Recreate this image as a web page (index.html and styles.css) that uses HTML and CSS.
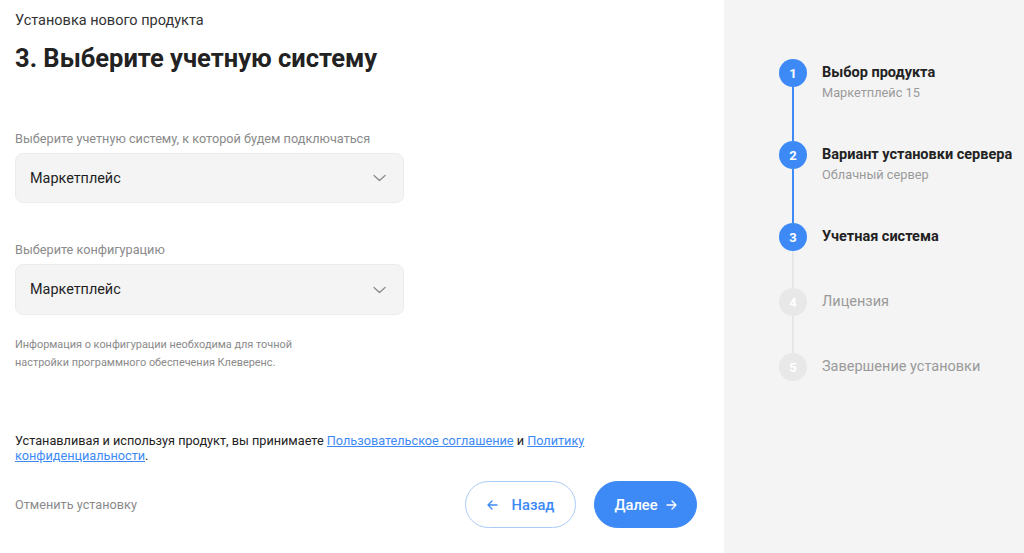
FILE: index.html
```html
<!DOCTYPE html>
<html lang="ru">
<head>
<meta charset="utf-8">
<title>Установка нового продукта</title>
<link rel="stylesheet" href="styles.css">
</head>
<body>
<div class="page">
  <main class="main">
    <div class="crumb">Установка нового продукта</div>
    <h1 class="title">3. Выберите учетную систему</h1>

    <div class="field-label first">Выберите учетную систему, к которой будем подключаться</div>
    <div class="select">
      <span class="select-value">Маркетплейс</span>
      <svg class="chevron" width="13" height="8" viewBox="0 0 13 8"><path d="M1 1.5 L6.5 6.5 L12 1.5" fill="none" stroke="#8a8a8a" stroke-width="1.3" stroke-linecap="round" stroke-linejoin="round"/></svg>
    </div>

    <div class="field-label second">Выберите конфигурацию</div>
    <div class="select tall">
      <span class="select-value">Маркетплейс</span>
      <svg class="chevron" width="13" height="8" viewBox="0 0 13 8"><path d="M1 1.5 L6.5 6.5 L12 1.5" fill="none" stroke="#8a8a8a" stroke-width="1.3" stroke-linecap="round" stroke-linejoin="round"/></svg>
    </div>

    <p class="info">Информация о конфигурации необходима для точной настройки программного обеспечения Клеверенс.</p>

    <p class="agreement">Устанавливая и используя продукт, вы принимаете <a href="#">Пользовательское соглашение</a> и <a href="#">Политику конфиденциальности</a>.</p>

    <div class="footer">
      <a class="cancel" href="#">Отменить установку</a>
      <div class="buttons">
        <button class="btn btn-back"><svg class="arrow-icon left" width="11" height="10" viewBox="0 0 11 10"><path d="M10 5 H1.2 M5 1 L1 5 L5 9" fill="none" stroke="currentColor" stroke-width="1.3" stroke-linecap="round" stroke-linejoin="round"/></svg>Назад</button>
        <button class="btn btn-next">Далее<svg class="arrow-icon right" width="11" height="10" viewBox="0 0 11 10"><path d="M1 5 H9.8 M6 1 L10 5 L6 9" fill="none" stroke="currentColor" stroke-width="1.3" stroke-linecap="round" stroke-linejoin="round"/></svg></button>
      </div>
    </div>
  </main>

  <aside class="side">
    <div class="step done tall-step">
      <div class="rail"><div class="circle">1</div><div class="line blue"></div></div>
      <div class="step-text"><div class="step-title">Выбор продукта</div><div class="step-sub">Маркетплейс 15</div></div>
    </div>
    <div class="step done tall-step">
      <div class="rail"><div class="circle">2</div><div class="line blue"></div></div>
      <div class="step-text"><div class="step-title">Вариант установки сервера</div><div class="step-sub">Облачный сервер</div></div>
    </div>
    <div class="step current short-step">
      <div class="rail"><div class="circle">3</div><div class="line grey"></div></div>
      <div class="step-text"><div class="step-title">Учетная система</div></div>
    </div>
    <div class="step future short-step">
      <div class="rail"><div class="circle">4</div><div class="line grey"></div></div>
      <div class="step-text"><div class="step-title">Лицензия</div></div>
    </div>
    <div class="step future">
      <div class="rail"><div class="circle">5</div></div>
      <div class="step-text"><div class="step-title">Завершение установки</div></div>
    </div>
  </aside>
</div>
</body>
</html>
```

FILE: styles.css
```css
* { box-sizing: border-box; }
html, body { margin: 0; padding: 0; }
body {
  font-family: Roboto, "Liberation Sans", Arial, sans-serif;
  color: #222;
  background: #fff;
}
.page {
  display: flex;
  width: 1024px;
  height: 553px;
}
.main {
  width: 724px;
  flex: none;
  padding: 11px 27px 0 15px;
  display: flex;
  flex-direction: column;
}
.crumb {
  font-size: 14.5px;
  line-height: 20px;
  color: #333;
}
.title {
  margin: 11px 0 0;
  font-size: 25.5px;
  line-height: 32px;
  font-weight: 700;
  color: #222;
}
.field-label {
  font-size: 12.7px;
  line-height: 18px;
  color: #8a8a8a;
}
.field-label.first { margin-top: 56px; }
.field-label.second { margin-top: 38px; }
.select {
  margin-top: 5px;
  width: 389px;
  height: 50px;
  background: #f4f4f4;
  border: 1px solid #ececec;
  border-radius: 8px;
  display: flex;
  align-items: center;
  justify-content: space-between;
  padding: 0 17px 0 14px;
}
.select.tall { height: 51px; }
.select-value {
  font-size: 14.4px;
  color: #1e1e1e;
}
.chevron { display: block; }
.info {
  margin: 21px 0 0;
  max-width: 300px;
  font-size: 10.9px;
  line-height: 18px;
  color: #8a8a8a;
}
.agreement {
  margin: 61px 0 0;
  max-width: 600px;
  font-size: 12.7px;
  line-height: 15px;
  color: #222;
}
.agreement a {
  color: #3d8af7;
  text-decoration: underline;
}
.footer {
  margin-top: 18px;
  display: flex;
  align-items: center;
  justify-content: space-between;
}
.cancel {
  font-size: 12.7px;
  color: #8a8a8a;
  text-decoration: none;
}
.buttons {
  display: flex;
  gap: 18px;
}
.btn {
  height: 47px;
  border-radius: 24px;
  font-family: Roboto, "Liberation Sans", Arial, sans-serif;
  font-size: 14.7px;
  font-weight: 500;
  display: flex;
  align-items: center;
  justify-content: center;
  cursor: pointer;
  padding: 0;
}
.btn-back {
  width: 111px;
  background: #fff;
  border: 1px solid #a9cbf5;
  color: #3d8af7;
}
.arrow-icon { display: block; }
.arrow-icon.left { margin-right: 14px; }
.arrow-icon.right { margin-left: 8px; }
.btn-next {
  width: 103px;
  background: #3d8af7;
  border: 1px solid #3d8af7;
  color: #fff;
}

.side {
  flex: 1;
  background: #f4f4f4;
  padding: 59px 0 0 55px;
}
.step {
  display: flex;
  gap: 15px;
}
.tall-step { height: 82px; }
.short-step { height: 65px; }
.rail {
  width: 28px;
  flex: none;
  display: flex;
  flex-direction: column;
  align-items: center;
}
.circle {
  width: 28px;
  height: 28px;
  border-radius: 50%;
  background: #3d8af7;
  color: #fff;
  font-size: 13px;
  font-weight: 700;
  display: flex;
  align-items: center;
  justify-content: center;
  flex: none;
}
.future .circle { background: #e8e8e8; }
.line {
  width: 2px;
  flex: 1;
}
.line.blue { background: #3d8af7; }
.line.grey { background: #e6e6e6; }
.step-text { padding-top: 4px; }
.step-title {
  font-size: 14.5px;
  line-height: 20px;
  font-weight: 700;
  color: #222;
}
.future .step-title {
  font-weight: 400;
  color: #9a9a9a;
}
.step-sub {
  font-size: 12.75px;
  line-height: 20px;
  color: #9a9a9a;
}
```
